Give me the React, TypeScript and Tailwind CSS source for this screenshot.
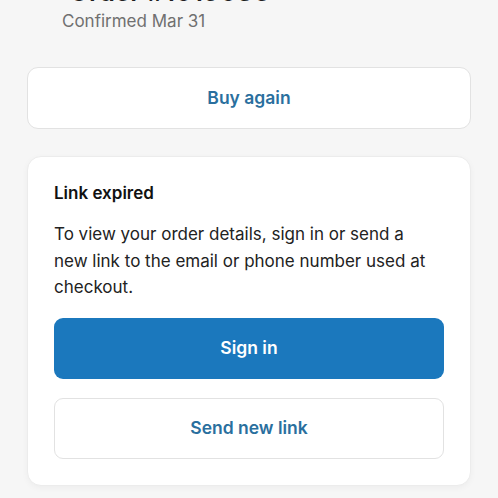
import { ArrowLeft } from 'lucide-react'

export default function App() {
  return (
    <div
      className="min-h-screen overflow-hidden bg-[#f6f6f6] px-[27px]"
      style={{ fontFamily: 'Inter, "Noto Sans", sans-serif' }}
    >
      {/* Header, cut off at the top */}
      <div className="-mt-[25px] pl-[4px]">
        <div className="flex items-center gap-[14px]">
          <ArrowLeft className="h-[24px] w-[24px] text-[#1f1f1f]" strokeWidth={2} />
          <h1 className="text-[26px] font-semibold leading-[34px] text-[#1f1f1f]">Order #1019036</h1>
        </div>
        <p className="mt-[1px] pl-[31px] text-[17px] leading-[22px] text-[#707070]">Confirmed Mar 31</p>
      </div>

      {/* Buy again */}
      <button className="mt-[35px] flex h-[62px] w-full items-center justify-center rounded-[11px] border border-[#e2e2e2] bg-white text-[17.5px] font-semibold text-[#2a6f9e]">
        Buy again
      </button>

      {/* Link expired card */}
      <div className="mt-[27px] rounded-[14px] border border-[#ececec] bg-white px-[26px] pb-[26px] pt-[26px] shadow-[0_2px_6px_rgba(0,0,0,0.04)]">
        <h2 className="text-[17px] font-semibold leading-[20px] text-[#111]">Link expired</h2>
        <p className="mt-[18px] pr-[12px] text-[17px] leading-[26.5px] text-[#222]">
          To view your order details, sign in or send a new link to the email or phone number used at checkout.
        </p>
        <button className="mt-[17px] flex h-[61px] w-full items-center justify-center rounded-[9px] bg-[#1b78bd] text-[17.5px] font-semibold text-white">
          Sign in
        </button>
        <button className="mt-[19px] flex h-[61px] w-full items-center justify-center rounded-[9px] border border-[#e2e2e2] bg-white text-[17.5px] font-semibold text-[#2a6f9e]">
          Send new link
        </button>
      </div>
    </div>
  )
}
